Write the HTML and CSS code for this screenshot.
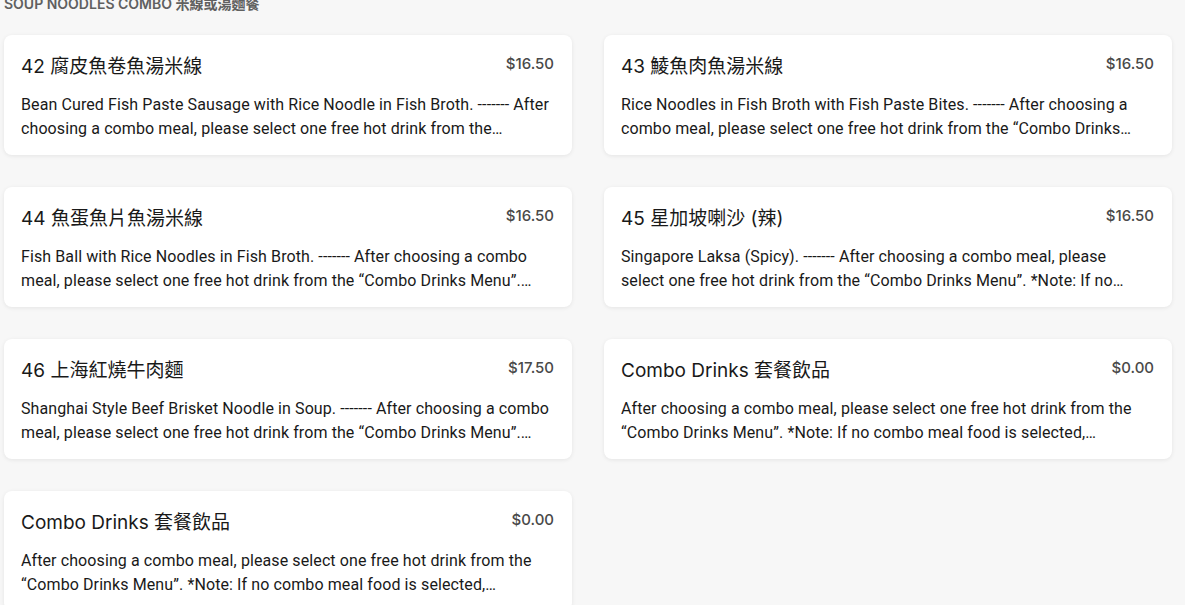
FILE: index.html
```html
<!DOCTYPE html>
<html lang="en">
<head>
<meta charset="utf-8">
<link rel="stylesheet" href="styles.css">
</head>
<body>
<section class="menu">
  <h2 class="menu-heading">SOUP NOODLES COMBO 米線或湯麵餐</h2>
  <div class="grid">
    <article class="card">
      <div class="card-top"><h3 class="title">42 腐皮魚卷魚湯米線</h3><span class="price">$16.50</span></div>
      <p class="desc">Bean Cured Fish Paste Sausage with Rice Noodle in Fish Broth. ------- After choosing a combo meal, please select one free hot drink from the…</p>
    </article>
    <article class="card">
      <div class="card-top"><h3 class="title">43 鯪魚肉魚湯米線</h3><span class="price">$16.50</span></div>
      <p class="desc">Rice Noodles in Fish Broth with Fish Paste Bites. ------- After choosing a combo meal, please select one free hot drink from the “Combo Drinks…</p>
    </article>
    <article class="card">
      <div class="card-top"><h3 class="title">44 魚蛋魚片魚湯米線</h3><span class="price">$16.50</span></div>
      <p class="desc">Fish Ball with Rice Noodles in Fish Broth. ------- After choosing a combo meal, please select one free hot drink from the “Combo Drinks Menu”.…</p>
    </article>
    <article class="card">
      <div class="card-top"><h3 class="title">45 星加坡喇沙 (辣)</h3><span class="price">$16.50</span></div>
      <p class="desc">Singapore Laksa (Spicy). ------- After choosing a combo meal, please select one free hot drink from the “Combo Drinks Menu”. *Note: If no…</p>
    </article>
    <article class="card">
      <div class="card-top"><h3 class="title">46 上海紅燒牛肉麵</h3><span class="price">$17.50</span></div>
      <p class="desc">Shanghai Style Beef Brisket Noodle in Soup. ------- After choosing a combo meal, please select one free hot drink from the “Combo Drinks Menu”.…</p>
    </article>
    <article class="card">
      <div class="card-top"><h3 class="title">Combo Drinks 套餐飲品</h3><span class="price">$0.00</span></div>
      <p class="desc">After choosing a combo meal, please select one free hot drink from the “Combo Drinks Menu”. *Note: If no combo meal food is selected,…</p>
    </article>
    <article class="card">
      <div class="card-top"><h3 class="title">Combo Drinks 套餐飲品</h3><span class="price">$0.00</span></div>
      <p class="desc">After choosing a combo meal, please select one free hot drink from the “Combo Drinks Menu”. *Note: If no combo meal food is selected,…</p>
    </article>
  </div>
</section>
</body>
</html>
```
FILE: styles.css
```css
html, body {
  margin: 0;
  padding: 0;
  background: #f7f7f7;
  font-family: Inter, "Noto Sans CJK TC", sans-serif;
  color: #191919;
  overflow: hidden;
}
.menu {
  padding: 0 0 0 4px;
}
.menu-heading {
  margin: -4px 0 23px 0;
  font-size: 14px;
  line-height: 16px;
  font-weight: 600;
  color: #606060;
}
.grid {
  display: grid;
  grid-template-columns: 568px 568px;
  column-gap: 32px;
  row-gap: 32px;
}
.card {
  background: #fff;
  border-radius: 8px;
  box-shadow: 0 1px 4px rgba(0,0,0,0.08);
  padding: 20px 18px 14px 17px;
  height: 120px;
  box-sizing: border-box;
}
.card-top {
  display: flex;
  justify-content: space-between;
  align-items: flex-start;
}
.title {
  margin: 0;
  font-size: 19px;
  line-height: 24px;
  font-weight: 400;
}
.price {
  font-size: 15px;
  line-height: 18px;
  font-weight: 500;
  color: #494949;
}
.desc {
  margin: 14px 0 0 0;
  padding-right: 4px;
  font-family: Roboto, "Noto Sans CJK TC", sans-serif;
  font-size: 16px;
  letter-spacing: 0.1px;
  line-height: 24px;
  display: -webkit-box;
  -webkit-line-clamp: 2;
  -webkit-box-orient: vertical;
  overflow: hidden;
}
```
